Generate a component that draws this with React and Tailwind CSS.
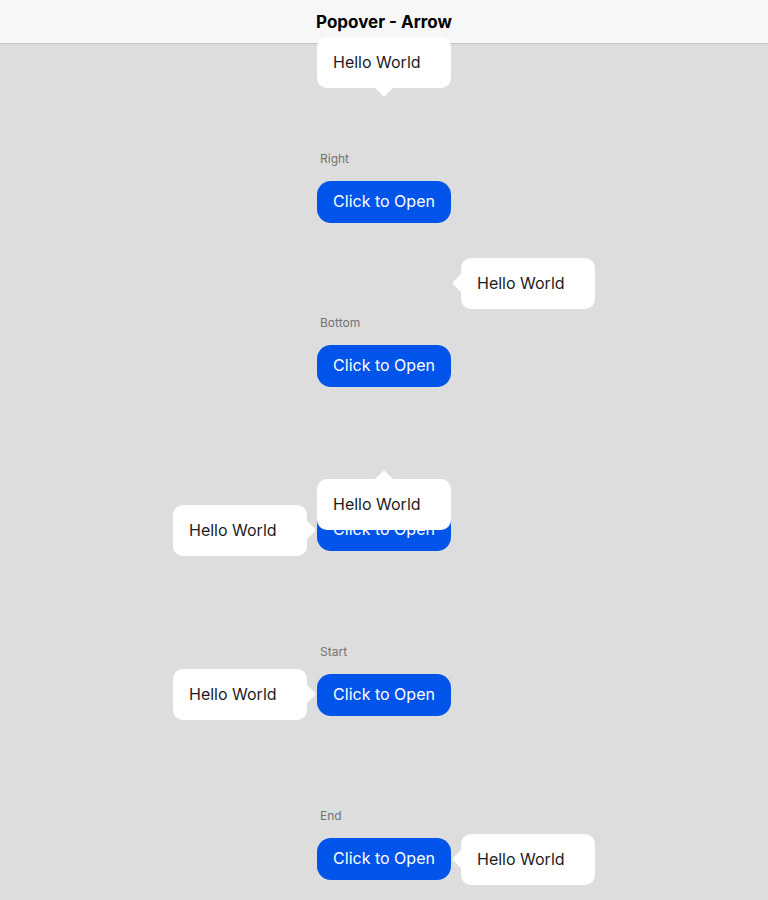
import React from 'react';

const FONT = { fontFamily: 'Inter, "Noto Sans", sans-serif' };

// arrow drawn as a small triangle with a soft tip
function Arrow({ dir }) {
  if (dir === 'down')
    return (
      <svg className="absolute left-[57px] top-[50px]" width="20" height="10" viewBox="0 0 20 10">
        <path d="M0 0 L8.6 8.6 Q10 10 11.4 8.6 L20 0 Z" fill="#fff" />
      </svg>
    );
  if (dir === 'up')
    return (
      <svg className="absolute left-[57px] top-[-9px]" width="20" height="10" viewBox="0 0 20 10">
        <path d="M0 10 L8.6 1.4 Q10 0 11.4 1.4 L20 10 Z" fill="#fff" />
      </svg>
    );
  if (dir === 'left')
    return (
      <svg className="absolute left-[-9px] top-[15px]" width="10" height="20" viewBox="0 0 10 20">
        <path d="M10 0 L1.4 8.6 Q0 10 1.4 11.4 L10 20 Z" fill="#fff" />
      </svg>
    );
  return (
    <svg className="absolute right-[-9px] top-[15px]" width="10" height="20" viewBox="0 0 10 20">
      <path d="M0 0 L8.6 8.6 Q10 10 8.6 11.4 L0 20 Z" fill="#fff" />
    </svg>
  );
}

function Popover({ pos, arrow }) {
  return (
    <div className={`absolute z-20 w-[134px] h-[51px] bg-white rounded-[10px] ${pos}`}>
      <Arrow dir={arrow} />
      <div className="px-4 pb-[2px] h-full flex items-center text-[16px] text-[#1c1c1c]">Hello World</div>
    </div>
  );
}

function Section({ label, h }) {
  return (
    <div className={`w-[134px] flex flex-col ${h}`}>
      <div className="pl-[3px] pt-[1px] h-4 leading-4 text-[12px] text-[#737373]">{label}</div>
      <button className="mt-[15px] w-[134px] h-[42px] pb-[2px] rounded-[14px] bg-[#0054e9] text-white text-[16px]">
        Click to Open
      </button>
    </div>
  );
}

export default function App() {
  return (
    <div className="relative w-[768px] h-[900px] overflow-hidden bg-[#dddddd]" style={FONT}>
      {/* Header */}
      <header className="relative z-10 h-[44px] pt-[2px] bg-[#f7f7f7] border-b border-[#c4c4c4] flex items-center justify-center">
        <h1 className="text-[17px] font-bold text-black">Popover - Arrow</h1>
      </header>

      {/* Demo sections */}
      <div className="flex flex-col items-center pt-[106px]">
        <Section label="Right" h="h-[164px]" />
        <Section label="Bottom" h="h-[164px]" />
        <Section label="Left" h="h-[165px]" />
        <Section label="Start" h="h-[164px]" />
        <Section label="End" h="h-[164px]" />
      </div>

      {/* Open popovers */}
      <Popover pos="left-[317px] top-[37px]" arrow="down" />
      <Popover pos="left-[461px] top-[258px]" arrow="left" />
      <Popover pos="left-[317px] top-[479px]" arrow="up" />
      <Popover pos="left-[173px] top-[505px]" arrow="right" />
      <Popover pos="left-[173px] top-[669px]" arrow="right" />
      <Popover pos="left-[461px] top-[834px]" arrow="left" />
    </div>
  );
}
